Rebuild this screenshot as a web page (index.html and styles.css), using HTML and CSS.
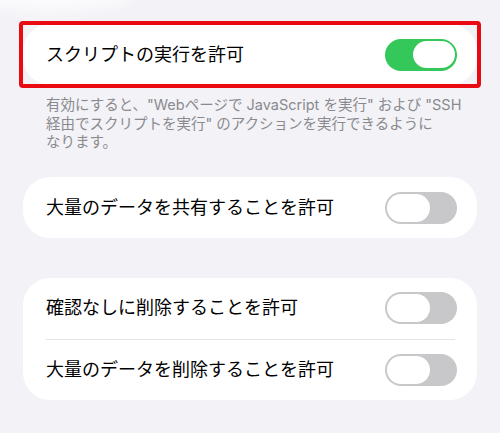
FILE: index.html
```html
<!DOCTYPE html>
<html lang="ja">
<head>
<meta charset="utf-8">
<link rel="stylesheet" href="styles.css">
</head>
<body>
<div class="glow"></div>
<main class="page">
  <div class="highlight">
    <section class="card">
      <div class="row">
        <span class="label">スクリプトの実行を許可</span>
        <span class="toggle on"><span class="knob"></span></span>
      </div>
    </section>
  </div>
  <p class="footnote">有効にすると、"Webページで JavaScript を実行" および "SSH<br>経由でスクリプトを実行" のアクションを実行できるように<br>なります。</p>

  <section class="card card-second">
    <div class="row">
      <span class="label">大量のデータを共有することを許可</span>
      <span class="toggle"><span class="knob"></span></span>
    </div>
  </section>

  <section class="card card-third">
    <div class="row">
      <span class="label">確認なしに削除することを許可</span>
      <span class="toggle"><span class="knob"></span></span>
    </div>
    <div class="sep"></div>
    <div class="row">
      <span class="label">大量のデータを削除することを許可</span>
      <span class="toggle"><span class="knob"></span></span>
    </div>
  </section>
</main>
</body>
</html>
```

FILE: styles.css
```css
html, body {
  margin: 0;
  padding: 0;
}
body {
  width: 500px;
  height: 433px;
  overflow: hidden;
  background: #f2f2f7;
  font-family: "Inter", "Noto Sans CJK JP", sans-serif;
  color: #000;
  position: relative;
}
.glow {
  position: absolute;
  left: -40px;
  top: -30px;
  width: 180px;
  height: 42px;
  border-radius: 50%;
  background: rgba(255, 255, 255, 0.7);
  filter: blur(8px);
}
.page {
  display: flex;
  flex-direction: column;
  padding: 24px 23px 0 23px;
  position: relative;
}
.highlight {
  position: relative;
}
.highlight::after {
  content: "";
  position: absolute;
  left: -4px;
  right: -4px;
  top: -3px;
  bottom: -3px;
  border: 4px solid #ea0a12;
  border-radius: 4px;
  pointer-events: none;
}
.card {
  background: #fff;
  border-radius: 27px;
  display: flex;
  flex-direction: column;
}
.row {
  height: 61px;
  display: flex;
  align-items: center;
  justify-content: space-between;
  padding: 0 20px 0 23px;
}
.card-third .row {
  height: 60.5px;
}
.label {
  font-size: 18px;
  letter-spacing: 0;
  line-height: 1;
}
.sep {
  height: 1px;
  background: #e3e3e8;
  margin: 0 22px 0 23px;
}
.footnote {
  margin: 11px 0 0 0;
  padding-left: 23px;
  font-size: 14.5px;
  line-height: 18.7px;
  color: #8a8a8e;
}
.card-second {
  margin-top: 25px;
}
.card-third {
  margin-top: 40px;
}
.toggle {
  width: 72px;
  height: 32px;
  border-radius: 16px;
  background: #c8c8cb;
  display: flex;
  align-items: center;
  padding: 0 2px;
  box-sizing: border-box;
  flex: none;
}
.toggle .knob {
  width: 43px;
  height: 28px;
  border-radius: 14px;
  background: #fff;
}
.toggle.on {
  background: #34c759;
  justify-content: flex-end;
}
.toggle.on .knob {
  width: 42px;
  height: 27px;
}
```
